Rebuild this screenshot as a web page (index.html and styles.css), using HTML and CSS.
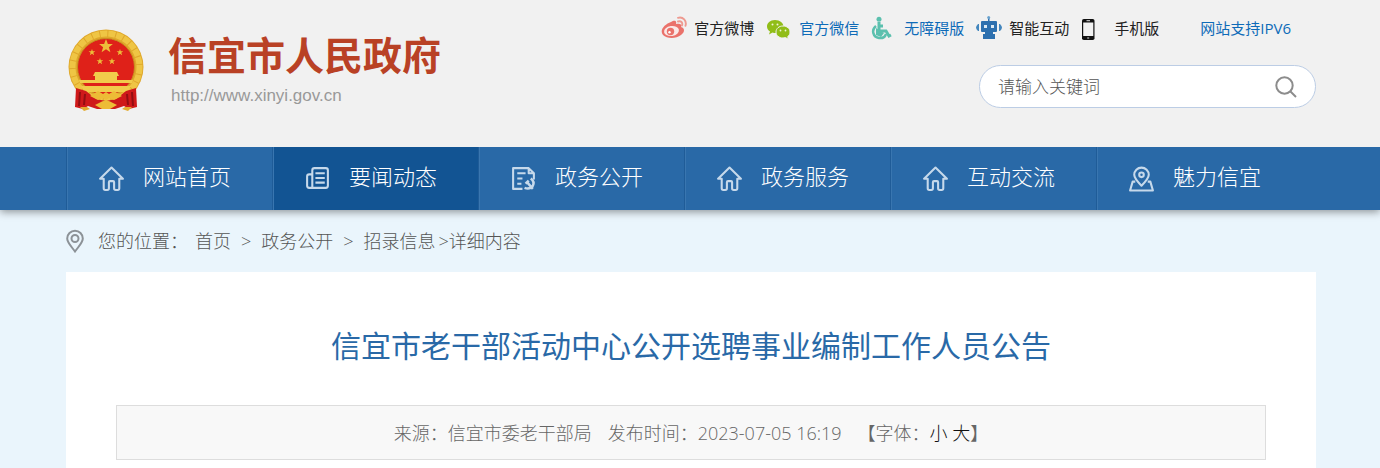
FILE: index.html
```html
<!DOCTYPE html>
<html lang="zh-CN">
<head>
  <meta charset="UTF-8" />
  <meta name="viewport" content="width=device-width, initial-scale=1.0"/>
  <title>信宜市老干部活动中心公开选聘事业编制工作人员公告</title>
  <link rel="stylesheet" href="styles.css">
</head>
<body>

  <!-- Shared icons -->
  <svg class="sprite" aria-hidden="true">
    <symbol id="icon-home" viewBox="0 0 26 26">
      <path d="M2 13.200 13 2.500 24 13.200H20.500V22.500Q20.500 24 19 24H17Q15.500 24 15.500 22.500V16.500Q15.500 15.500 14.500 15.500H11.500Q10.500 15.500 10.500 16.500V22.500Q10.500 24 9 24H7Q5.500 24 5.500 22.500V13.200Z"/>
    </symbol>
  </svg>

  <header class="header">
    <div class="wrap header-inner">
      <a class="logo" href="index.html">
        <svg class="emblem" viewBox="0 0 78 84" aria-hidden="true">
          <circle cx="39" cy="39" r="37.500" fill="#dfa72b"/>
          <circle cx="39" cy="39" r="33.500" fill="none" stroke="#efc544" stroke-width="6" stroke-dasharray="7 1"/>
          <circle cx="39" cy="39" r="28.500" fill="#df2119" stroke="#c98c20"/>
          <g fill="#edbd3a">
            <path d="M39 11l1.900 5h5l-4 3.200 1.500 5L39 21.200 34.600 24.200l1.500-5-4-3.200h5z"/>
            <path d="M25 21l.8 2.200h2.500l-2 1.600.8 2.500-2.100-1.500-2.200 1.500.8-2.500-2-1.600h2.500zM53 21l.8 2.200h2.500l-2 1.600.8 2.500-2.100-1.500-2.200 1.500.8-2.500-2-1.600h2.500zM33 30l.8 2.200h2.500l-2 1.600.8 2.500-2.100-1.500-2.200 1.500.8-2.500-2-1.600h2.500zM45 30l.8 2.200h2.500l-2 1.600.8 2.500-2.100-1.500-2.200 1.500.8-2.500-2-1.600h2.500z"/>
          </g>
          <path d="M28 44h22l2 4h-2v4h16l-1 3H13l-1-3h16v-4h-2z" fill="#f1cc4b"/>
          <path d="M14 58h50l-4 6H18z" fill="#f1cc4b"/>
          <path d="M9 60l10 3 10 8 10 2 10-2 10-8 10-3 1 19-8 2-5-3-9 3H30l-9-3-5 3-8-2z" fill="#cf191a"/>
          <path d="M13 64l-1 14M18 66l-1 11M65 64l1 14M60 66l1 11" stroke="#930e12" stroke-width="2"/>
          <path d="M23 68l8-5 5 3 3-2 3 2 5-3 8 5-8 4-5-2-3 2-3-2-5 2z" fill="#edbc36"/>
          <path d="M32 75q7-5 14 0l4 2-7 4h-8l-7-4z" fill="#edbc36"/>
          <path d="M13 79h7l3 2-6 2zM65 79h-7l-3 2 6 2z" fill="#e3ac31"/>
        </svg>
        <span class="logo-text">
          <span class="logo-name">信宜市人民政府</span>
          <span class="logo-url">http://www.xinyi.gov.cn</span>
        </span>
      </a>

      <div class="header-side">
        <nav class="top-links" aria-label="快捷链接">
          <a href="#weibo">
            <svg class="top-icon" viewBox="0 0 26 24" aria-hidden="true">
              <path d="M10 6c3-2 6-2 5 2 4-1 6 0 5 3 4 1 4 5 0 8-5 4-14 4-18 0C-2 14 4 8 10 6z" fill="#ea726b"/>
              <ellipse cx="10.500" cy="15" rx="7.500" ry="5" transform="rotate(-9 10.500 15)" fill="#fbe8e7"/>
              <circle cx="9.500" cy="15.500" r="3.700" fill="#ea726b"/>
              <circle cx="8.500" cy="16.200" r="1.200" fill="#fff"/>
              <path d="M17 5.500c3-1 5 1 4 4M17 1.800c5-1.500 9 3 7.500 8" fill="none" stroke="#ee9a90" stroke-width="1.900" stroke-linecap="round"/>
            </svg>
            <span>官方微博</span>
          </a>
          <a class="blue" href="#weixin">
            <svg class="top-icon" viewBox="0 0 26 24" aria-hidden="true">
              <path d="M9 4C4 4 1 7 1 10.500c0 2 1 3.700 3 5L3 18.500l3.500-2c1 .4 2 .5 3.500.5 4 0 7.500-3 7.500-6.500S14 4 9 4z" fill="#91bd18"/>
              <path d="M17 10c-4 0-7 2.500-7 6s3 6 7 6l2.500-.4 3 1.700-.8-2.700c1.500-1 2.300-2.700 2.300-4.600C24 12.500 21 10 17 10z" fill="#91bd18" stroke="#f1f1f1"/>
              <circle cx="6.500" cy="8.500" r="1" fill="#eff6d6"/><circle cx="11.500" cy="8.500" r="1" fill="#eff6d6"/>
              <circle cx="14.500" cy="14.500" r=".9" fill="#eff6d6"/><circle cx="19.500" cy="14.500" r=".9" fill="#eff6d6"/>
            </svg>
            <span>官方微信</span>
          </a>
          <a class="blue" href="#accessible">
            <svg class="top-icon" viewBox="0 0 26 24" aria-hidden="true">
              <circle cx="8" cy="3.200" r="2.500" fill="#5bc0ae"/>
              <path d="M8 6v9h7l3 5 2-1M8 10h4" fill="none" stroke="#5bc0ae" stroke-width="3"/>
              <path d="M5 10c-5 4-3 11 3 12 4 .5 6-1 7-4" fill="none" stroke="#5bc0ae" stroke-width="2.500"/>
              <path d="M5 12l8 5-3 4-5-2z" fill="#5bc0ae"/>
            </svg>
            <span>无障碍版</span>
          </a>
          <a href="#robot">
            <svg class="top-icon" viewBox="0 0 26 24" aria-hidden="true">
              <path d="M12 1h1.500v5H12zM6 5h14q1 0 1 1v9q0 1-1 1h-3v2h2v5H7v-5h2v-2H6q-1 0-1-1V6q0-1 1-1z" fill="#2d70af"/>
              <path d="M3 8v7H2q-2-2-2-3.500T2 8zM23 8v7h1q2-2 2-3.500T24 8z" fill="#4386bd"/>
              <circle cx="12.700" cy="1.500" r="1.500" fill="#6aa2ce"/>
              <path d="M8 9h3v3H8zM15 9h3v3h-3z" fill="#dceaf5"/>
            </svg>
            <span>智能互动</span>
          </a>
          <a href="#mobile">
            <svg class="top-icon" viewBox="0 0 26 24" aria-hidden="true">
              <rect x="1" y="3" width="12.500" height="21" rx="1.800" fill="#111"/>
              <path d="M2.200 6.500h10.100V20H2.200z" fill="#f1f1f1"/>
              <path d="M5.500 4.700h3.500M6.200 22h2" stroke="#ddd"/>
            </svg>
            <span>手机版</span>
          </a>
          <a class="blue ipv6" href="#ipv6">网站支持IPV6</a>
        </nav>

        <form class="search" role="search">
          <input type="search" placeholder="请输入关键词" aria-label="请输入关键词">
          <button type="submit" aria-label="搜索">
            <svg viewBox="0 0 22 22" aria-hidden="true">
              <circle cx="9.500" cy="9.500" r="8.200"/>
              <path d="M15.500 15.500 21 21"/>
            </svg>
          </button>
        </form>
      </div>
    </div>
  </header>

  <!-- Main navigation -->
  <nav class="nav" aria-label="主导航">
    <div class="wrap nav-inner">
      <a href="index.html">
        <svg aria-hidden="true"><use href="#icon-home"/></svg>
        <span>网站首页</span>
      </a>
      <a class="active" href="#news">
        <svg viewBox="0 0 26 26" aria-hidden="true">
          <path d="M8 22V5q0-2 2-2h11q2 0 2 2v15q0 2-2 2H5q-2 0-2-2V11q0-2 2-2h3M11 8h9M11 12.500h9M11 17h9"/>
        </svg>
        <span>要闻动态</span>
      </a>
      <a href="#open">
        <svg viewBox="0 0 26 26" aria-hidden="true">
          <path d="M12 23H3V3h15l5 5v6M18 3v5h5M7 8h8M7 13h5M7 18h4"/>
          <path d="M14 22q5 2 8-2 2-4-2-7M15 18l3-3M16 16l6 7" stroke-width="2.400"/>
        </svg>
        <span>政务公开</span>
      </a>
      <a href="#service">
        <svg aria-hidden="true"><use href="#icon-home"/></svg>
        <span>政务服务</span>
      </a>
      <a href="#interact">
        <svg aria-hidden="true"><use href="#icon-home"/></svg>
        <span>互动交流</span>
      </a>
      <a href="#city">
        <svg viewBox="0 0 26 26" aria-hidden="true">
          <path d="M13 20C9 16 6 13 6 9.500a7 7 0 0 1 14 0c0 3.500-3 6.500-7 10.500z"/>
          <circle cx="13" cy="9.500" r="2.200"/>
          <path d="M7 16H4.500L2 24.500h22L21.500 16H19"/>
        </svg>
        <span>魅力信宜</span>
      </a>
    </div>
  </nav>

  <main class="wrap">
    <div class="location">
      <svg viewBox="0 0 18 24" aria-hidden="true">
        <path d="M9 22.500C5 17 1.200 13.500 1.200 9.500a7.800 7.800 0 0 1 15.600 0c0 4-3.800 7.500-7.800 13z"/>
        <circle cx="9" cy="9.500" r="3.500"/>
      </svg>
      <span class="location-label">您的位置&#65306;</span>
      <a href="index.html">首页</a>
      <span class="sep">&gt;</span>
      <a href="#open">政务公开</a>
      <span class="sep">&gt;</span>
      <a href="#recruit">招录信息</a>
      <span class="current">&gt;详细内容</span>
    </div>

    <article class="article">
      <h1>信宜市老干部活动中心公开选聘事业编制工作人员公告</h1>
      <div class="info">
        <span>来源&#65306;信宜市委老干部局</span>
        <span>发布时间&#65306;2023-07-05 16:19</span>
        <span>【字体&#65306;<button type="button">小</button> <button type="button">大</button>】</span>
      </div>
    </article>
  </main>

</body>
</html>
```
FILE: styles.css
```css
* {
  box-sizing: border-box;
  margin: 0;
  padding: 0;
}

body {
  background: #eaf5fc;
  color: #555;
  font-family: "Open Sans", "Noto Sans CJK SC", sans-serif;
  font-size: 18px;
  font-weight: 300;
}

a {
  color: inherit;
  text-decoration: none;
}

a:hover {
  text-decoration: underline;
}

button,
input {
  background: none;
  border: 0;
  font: inherit;
}

button {
  cursor: pointer;
}

.sprite {
  display: none;
}

.wrap {
  max-width: 1380px;
  margin: 0 auto;
  padding: 0 64px 0 66px;
}

/* Header */
.header {
  position: relative;
  z-index: 1;
  background: #f1f1f1;
}

.header-inner {
  display: flex;
  justify-content: space-between;
  min-height: 147px;
}

.logo {
  display: flex;
  align-items: flex-start;
  padding-top: 28px;
}

.emblem {
  width: 80px;
  height: 84px;
}

.logo-text {
  display: flex;
  flex-direction: column;
  padding-left: 22px;
}

.logo-name {
  color: #b94125;
  font-size: 39px;
  font-weight: 700;
  line-height: 54px;
}

.logo-url {
  padding-left: 3px;
  color: #999;
  font-family: "Liberation Sans", sans-serif;
  font-size: 17px;
  font-weight: 400;
  line-height: 28px;
}

.header-side {
  display: flex;
  flex-direction: column;
  align-items: flex-end;
}

.top-links {
  display: flex;
  padding: 16px 25px 0 0;
  color: #222;
  font-size: 15px;
  font-weight: 400;
  line-height: 24px;
}

.top-links a {
  display: flex;
  gap: 7px;
  width: 105px;
}

.top-links .blue {
  color: #0e6bb8;
}

.top-links .ipv6 {
  width: auto;
  padding-left: 14px;
}

.top-icon {
  width: 26px;
  height: 24px;
}

.search {
  display: flex;
  align-items: center;
  width: 337px;
  height: 43px;
  margin-top: 25px;
  padding: 0 18px;
  background: #fff;
  border: 1px solid #bccde5;
  border-radius: 22px;
}

.search input {
  flex: 1;
  min-width: 0;
  outline: none;
  color: #555;
  font-size: 17px;
}

.search input::placeholder {
  color: #555;
}

.search button {
  display: flex;
}

.search svg {
  width: 22px;
  height: 22px;
  fill: none;
  stroke: #8c8c8c;
  stroke-width: 2;
}

/* Main navigation */
.nav {
  background: #2969a7;
  box-shadow: 0 2px 8px rgba(0, 0, 0, 0.4);
}

.nav-inner {
  display: grid;
  grid-template-columns: repeat(6, 206px);
}

.nav a {
  display: flex;
  align-items: center;
  gap: 18px;
  height: 63px;
  padding-left: 31px;
  border-left: 1px solid #1f5c98;
  box-shadow: inset 1px 0 #3976b0;
  color: #fff;
  font-size: 22px;
}

.nav a.active {
  background: #125493;
}

.nav span {
  padding-bottom: 8px;
}

.nav svg {
  width: 27px;
  height: 27px;
  fill: none;
  stroke: #c6d9eb;
  stroke-width: 2;
  stroke-linejoin: round;
}

/* Breadcrumb */
.location {
  display: flex;
  align-items: center;
  height: 62px;
  line-height: 24px;
}

.location svg {
  width: 18px;
  height: 24px;
  margin-right: 14px;
  fill: none;
  stroke: #8c9297;
  stroke-width: 2;
}

.location-label {
  margin-right: 7px;
}

.sep {
  margin: 0 10px;
}

.current {
  margin-left: 3px;
}

/* Article */
.article {
  padding: 50px 50px 20px;
  background: #fff;
}

.article h1 {
  color: #2969a7;
  font-size: 30px;
  font-weight: 400;
  line-height: 48px;
  text-align: center;
}

.info {
  display: flex;
  flex-wrap: wrap;
  align-items: center;
  justify-content: center;
  gap: 16px;
  min-height: 55px;
  margin-top: 35px;
  background: #f8f8f8;
  border: 1px solid #ddd;
  color: #666;
  line-height: 24px;
}

.info button {
  color: #111;
}
```
